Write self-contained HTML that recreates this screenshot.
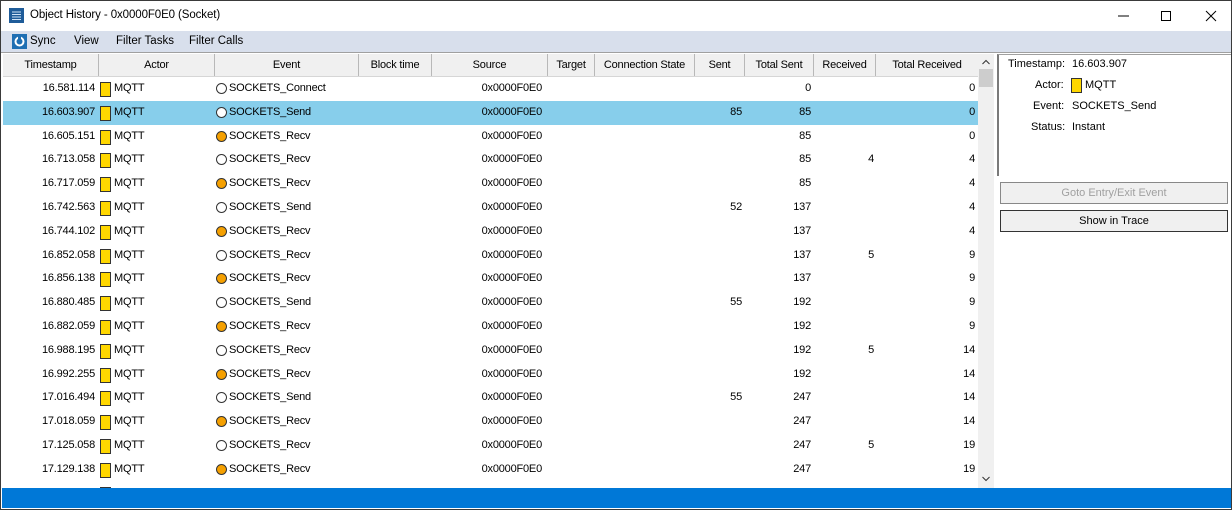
<!DOCTYPE html>
<html><head><meta charset="utf-8"><style>
*{box-sizing:border-box;margin:0;padding:0}
body{width:1232px;height:510px;overflow:hidden;background:#f0f0f0;font-family:"Liberation Sans",sans-serif;font-size:11px;color:#000;position:relative}
.win{position:absolute;left:0;top:0;width:1232px;height:510px;border:1px solid #3a3a3a;background:#fff}
.title{position:absolute;left:0;top:0;width:1230px;height:30px;background:#fff}
.title .t{position:absolute;left:29px;top:8px;font-size:11.5px;letter-spacing:-0.1px}
.menu{position:absolute;left:0;top:30px;width:1230px;height:22px;background:#d8dfec;border-bottom:1px solid #a0a0a0}
.menu span{position:absolute;top:4px;font-size:11.5px}
.hdr{position:absolute;left:2px;top:53px;width:975px;height:23px;background:#f0f0f0;border-bottom:1px solid #d6d6d6}
.hdr span{position:absolute;top:0;height:22px;line-height:22px;text-align:center;border-right:1px solid #b8b8b8;letter-spacing:-0.2px}
.body{position:absolute;left:2px;top:76px;width:975px;height:411px;background:#fff;overflow:hidden}
.r{position:absolute;left:0;width:975px;height:23.8px;line-height:23.8px;letter-spacing:-0.2px}
.r.sel{background:#87ceeb}
.r span{position:absolute;top:0}
.ts{right:883px}
.box{position:absolute;left:97px;top:5px;width:11px;height:15px;background:#ffd700;border:1px solid #333}
.ac{left:111px}
.c{position:absolute;left:213px;top:6px;width:11px;height:11px;border-radius:50%;border:1px solid #333;background:#fff}
.c.f{background:#f5a000}
.ev{left:226px}
.src{right:436px}
.s{right:236px}.ts2{right:167px}.rc{right:104px}.tr{right:3px}
.sb{position:absolute;left:977px;top:53px;width:16px;height:434px;background:#f0f0f0}
.panel{position:absolute;left:996px;top:53px;width:234px;height:122px;border-left:2px solid #7a7a7a;border-top:1px solid #a0a0a0}
.panel span{position:absolute}
.btn{position:absolute;left:999px;width:228px;height:22px;border:1px solid #333;background:#f0f0f0;text-align:center;line-height:20px}
.status{position:absolute;left:1px;top:487px;width:1229px;height:20px;background:#0078d7}
</style></head><body><div class="win">
<div class="title">
<svg style="position:absolute;left:8px;top:7px" width="15" height="15" viewBox="0 0 15 15"><rect x="0" y="0" width="15" height="15" fill="#1f5c99"/><g stroke="#cfe3f7" stroke-width="1"><line x1="3" y1="4" x2="12" y2="4"/><line x1="3" y1="6.5" x2="12" y2="6.5"/><line x1="3" y1="9" x2="12" y2="9"/><line x1="3" y1="11.5" x2="12" y2="11.5"/></g></svg>
<span class="t">Object History - 0x0000F0E0 (Socket)</span>
<svg style="position:absolute;left:1110px;top:8px" width="110" height="14"><line x1="7" y1="7" x2="18" y2="7" stroke="#000"/><rect x="50.5" y="2.5" width="9" height="9" fill="none" stroke="#000"/><path d="M95 2 L105 12 M105 2 L95 12" stroke="#000"/></svg>
</div>
<div class="menu">
<svg style="position:absolute;left:11px;top:3px" width="15" height="15"><rect width="15" height="15" fill="#1f6fb3"/><circle cx="7.5" cy="7.5" r="4" fill="none" stroke="#fff" stroke-width="2"/><rect x="6" y="2" width="3" height="3" fill="#1f6fb3"/></svg>
<span style="left:29px">Sync</span><span style="left:73px">View</span><span style="left:115px">Filter Tasks</span><span style="left:188px">Filter Calls</span>
</div>
<div class="hdr">
<span style="left:0;width:96px">Timestamp</span><span style="left:96px;width:116px">Actor</span><span style="left:212px;width:144px">Event</span><span style="left:356px;width:73px">Block time</span><span style="left:429px;width:116px">Source</span><span style="left:545px;width:47px">Target</span><span style="left:592px;width:100px">Connection State</span><span style="left:692px;width:50px">Sent</span><span style="left:742px;width:69px">Total Sent</span><span style="left:811px;width:62px">Received</span><span style="left:873px;width:102px;border-right:none">Total Received</span>
</div>
<div class="body">
<div class="r" style="top:0"><span class="ts">16.581.114</span><i class="box"></i><span class="ac">MQTT</span><i class="c"></i><span class="ev">SOCKETS_Connect</span><span class="src">0x0000F0E0</span><span class="ts2">0</span><span class="tr">0</span></div>
<div class="r sel" style="top:23.8px"><span class="ts">16.603.907</span><i class="box"></i><span class="ac">MQTT</span><i class="c"></i><span class="ev">SOCKETS_Send</span><span class="src">0x0000F0E0</span><span class="s">85</span><span class="ts2">85</span><span class="tr">0</span></div>
<div class="r" style="top:47.6px"><span class="ts">16.605.151</span><i class="box"></i><span class="ac">MQTT</span><i class="c f"></i><span class="ev">SOCKETS_Recv</span><span class="src">0x0000F0E0</span><span class="ts2">85</span><span class="tr">0</span></div>
<div class="r" style="top:71.4px"><span class="ts">16.713.058</span><i class="box"></i><span class="ac">MQTT</span><i class="c"></i><span class="ev">SOCKETS_Recv</span><span class="src">0x0000F0E0</span><span class="ts2">85</span><span class="rc">4</span><span class="tr">4</span></div>
<div class="r" style="top:95.2px"><span class="ts">16.717.059</span><i class="box"></i><span class="ac">MQTT</span><i class="c f"></i><span class="ev">SOCKETS_Recv</span><span class="src">0x0000F0E0</span><span class="ts2">85</span><span class="tr">4</span></div>
<div class="r" style="top:119px"><span class="ts">16.742.563</span><i class="box"></i><span class="ac">MQTT</span><i class="c"></i><span class="ev">SOCKETS_Send</span><span class="src">0x0000F0E0</span><span class="s">52</span><span class="ts2">137</span><span class="tr">4</span></div>
<div class="r" style="top:142.8px"><span class="ts">16.744.102</span><i class="box"></i><span class="ac">MQTT</span><i class="c f"></i><span class="ev">SOCKETS_Recv</span><span class="src">0x0000F0E0</span><span class="ts2">137</span><span class="tr">4</span></div>
<div class="r" style="top:166.6px"><span class="ts">16.852.058</span><i class="box"></i><span class="ac">MQTT</span><i class="c"></i><span class="ev">SOCKETS_Recv</span><span class="src">0x0000F0E0</span><span class="ts2">137</span><span class="rc">5</span><span class="tr">9</span></div>
<div class="r" style="top:190.4px"><span class="ts">16.856.138</span><i class="box"></i><span class="ac">MQTT</span><i class="c f"></i><span class="ev">SOCKETS_Recv</span><span class="src">0x0000F0E0</span><span class="ts2">137</span><span class="tr">9</span></div>
<div class="r" style="top:214.2px"><span class="ts">16.880.485</span><i class="box"></i><span class="ac">MQTT</span><i class="c"></i><span class="ev">SOCKETS_Send</span><span class="src">0x0000F0E0</span><span class="s">55</span><span class="ts2">192</span><span class="tr">9</span></div>
<div class="r" style="top:238px"><span class="ts">16.882.059</span><i class="box"></i><span class="ac">MQTT</span><i class="c f"></i><span class="ev">SOCKETS_Recv</span><span class="src">0x0000F0E0</span><span class="ts2">192</span><span class="tr">9</span></div>
<div class="r" style="top:261.8px"><span class="ts">16.988.195</span><i class="box"></i><span class="ac">MQTT</span><i class="c"></i><span class="ev">SOCKETS_Recv</span><span class="src">0x0000F0E0</span><span class="ts2">192</span><span class="rc">5</span><span class="tr">14</span></div>
<div class="r" style="top:285.6px"><span class="ts">16.992.255</span><i class="box"></i><span class="ac">MQTT</span><i class="c f"></i><span class="ev">SOCKETS_Recv</span><span class="src">0x0000F0E0</span><span class="ts2">192</span><span class="tr">14</span></div>
<div class="r" style="top:309.4px"><span class="ts">17.016.494</span><i class="box"></i><span class="ac">MQTT</span><i class="c"></i><span class="ev">SOCKETS_Send</span><span class="src">0x0000F0E0</span><span class="s">55</span><span class="ts2">247</span><span class="tr">14</span></div>
<div class="r" style="top:333.2px"><span class="ts">17.018.059</span><i class="box"></i><span class="ac">MQTT</span><i class="c f"></i><span class="ev">SOCKETS_Recv</span><span class="src">0x0000F0E0</span><span class="ts2">247</span><span class="tr">14</span></div>
<div class="r" style="top:357px"><span class="ts">17.125.058</span><i class="box"></i><span class="ac">MQTT</span><i class="c"></i><span class="ev">SOCKETS_Recv</span><span class="src">0x0000F0E0</span><span class="ts2">247</span><span class="rc">5</span><span class="tr">19</span></div>
<div class="r" style="top:380.8px"><span class="ts">17.129.138</span><i class="box"></i><span class="ac">MQTT</span><i class="c f"></i><span class="ev">SOCKETS_Recv</span><span class="src">0x0000F0E0</span><span class="ts2">247</span><span class="tr">19</span></div>
<div class="r" style="top:404.6px"><i class="box"></i></div>
</div>
<div class="sb">
<svg style="position:absolute;left:4px;top:5px" width="8" height="6"><path d="M0.5 5 L4 1.5 L7.5 5" fill="none" stroke="#333"/></svg>
<div style="position:absolute;left:1px;top:15px;width:14px;height:18px;background:#cdcdcd"></div>
<svg style="position:absolute;left:4px;top:422px" width="8" height="6"><path d="M0.5 1 L4 4.5 L7.5 1" fill="none" stroke="#333"/></svg>
</div>
<div class="panel">
<span style="left:9px;top:3px">Timestamp:</span><span style="left:73px;top:3px">16.603.907</span>
<span style="left:36px;top:24px">Actor:</span><i style="position:absolute;left:72px;top:23px;width:11px;height:15px;background:#ffd700;border:1px solid #333"></i><span style="left:86px;top:24px">MQTT</span>
<span style="left:34px;top:45px">Event:</span><span style="left:73px;top:45px">SOCKETS_Send</span>
<span style="left:32px;top:66px">Status:</span><span style="left:73px;top:66px">Instant</span>
</div>
<div class="btn" style="top:181px;color:#a0a0a0;border-color:#888">Goto Entry/Exit Event</div>
<div class="btn" style="top:209px">Show in Trace</div>
<div class="status"></div>
</div></body></html>
